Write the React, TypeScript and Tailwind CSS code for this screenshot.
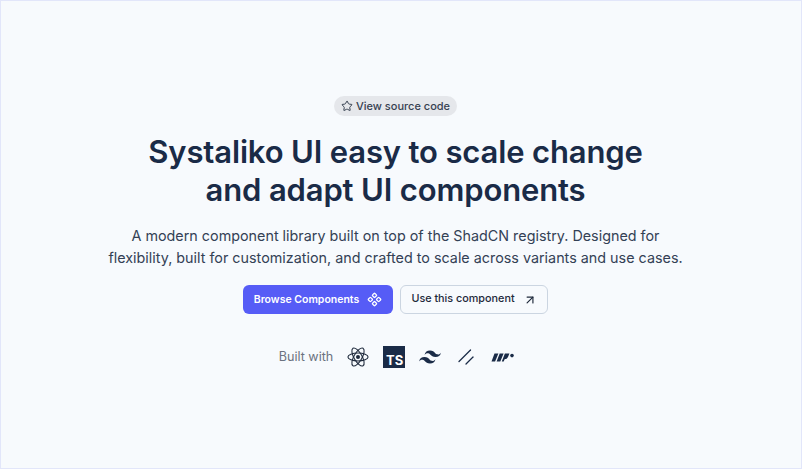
import { ArrowUpRight, Component, Star } from "lucide-react";

function ReactLogo() {
  return (
    <svg width="22" height="22" viewBox="0 0 24 24" fill="none" stroke="#1e293b" strokeWidth="1.2">
      <circle cx="12" cy="12" r="2.2" fill="#1e293b" stroke="none" />
      <ellipse cx="12" cy="12" rx="11" ry="4.4" />
      <ellipse cx="12" cy="12" rx="11" ry="4.4" transform="rotate(60 12 12)" />
      <ellipse cx="12" cy="12" rx="11" ry="4.4" transform="rotate(120 12 12)" />
    </svg>
  );
}

function TsLogo() {
  return (
    <div className="flex h-[22px] w-[22px] items-end justify-end bg-[#1a2b47] pr-[2px] text-[13px] leading-[15px] font-bold text-white">
      TS
    </div>
  );
}

function TailwindLogo() {
  return (
    <svg width="22" height="14" viewBox="0 0 24 15" fill="#1a2b47">
      <path d="M12 0.5c-3.2 0-5.2 1.6-6 4.8 1.2-1.6 2.6-2.2 4.2-1.8.9.2 1.6.9 2.3 1.6 1.2 1.2 2.5 2.5 5.5 2.5 3.2 0 5.2-1.6 6-4.8-1.2 1.6-2.6 2.2-4.2 1.8-.9-.2-1.6-.9-2.3-1.6C16.3 1.8 15 .5 12 .5ZM6 7.6c-3.2 0-5.2 1.6-6 4.8 1.2-1.6 2.6-2.2 4.2-1.8.9.2 1.6.9 2.3 1.6 1.2 1.2 2.5 2.5 5.5 2.5 3.2 0 5.2-1.6 6-4.8-1.2 1.6-2.6 2.2-4.2 1.8-.9-.2-1.6-.9-2.3-1.6C10.3 8.9 9 7.6 6 7.6Z" />
    </svg>
  );
}

function ShadcnLogo() {
  return (
    <svg width="16" height="16" viewBox="0 0 16 16" fill="none" stroke="#1a2b47" strokeWidth="1.3" strokeLinecap="round">
      <path d="M1 12.5 12.5 1" />
      <path d="M8 15 15 8" />
    </svg>
  );
}

function MotionLogo() {
  return (
    <svg width="23" height="9" viewBox="0 0 23 9" fill="#1a2b47">
      <path d="M3.5 0.5H7.4L4.1 8.5H0.5Z" />
      <path d="M8.7 0.5H12.6L9.3 8.5H5.6Z" />
      <path d="M13.9 0.5H18.4L17 4Q16 6.2 13.6 6.2L12.7 8.5H10.8Z" />
      <circle cx="21" cy="2.6" r="1.8" />
    </svg>
  );
}

export default function App() {
  return (
    <div className="flex h-[469px] w-[802px] flex-col items-center border border-[#e2e6fa] bg-[#f7fafd] pt-[95px] pr-[11px] font-['Inter',sans-serif]">
      <a className="flex h-5 items-center gap-[3px] rounded-full bg-[#e5e7eb] px-[7px] text-[11px] font-medium text-[#374151]">
        <Star className="h-3 w-3" />
        View source code
      </a>
      <h1 className="mt-[17px] w-[600px] text-center text-[31px] leading-[38px] font-semibold tracking-[-0.15px] text-[#1a2b47]">
        Systaliko UI easy to scale change
        <br />
        and adapt UI components
      </h1>
      <p className="mt-[16px] text-center text-[14.35px] leading-[22px] text-[#334155]">
        A modern component library built on top of the ShadCN registry. Designed for
        <br />
        flexibility, built for customization, and crafted to scale across variants and use cases.
      </p>
      <div className="mt-[16px] flex gap-[7px]">
        <button className="flex h-[29px] w-[150px] items-center justify-center gap-2 rounded-md bg-[#565cf6] text-[10.5px] font-semibold text-white">
          Browse Components
          <Component className="h-[15px] w-[15px]" />
        </button>
        <button className="flex h-[29px] w-[148px] items-center justify-center gap-2 rounded-md border border-[#cbd5e1] text-[10.8px] font-medium text-[#1e293b]">
          Use this component
          <ArrowUpRight className="h-[14px] w-[14px]" />
        </button>
      </div>
      <div className="mt-[32px] flex items-center pl-[2px]">
        <span className="mr-[14px] text-[12.6px] text-[#6b7280]">Built with</span>
        <div className="flex items-center">
          <ReactLogo />
          <div className="ml-[14px]"><TsLogo /></div>
          <div className="ml-[14px]"><TailwindLogo /></div>
          <div className="ml-[17px]"><ShadcnLogo /></div>
          <div className="ml-[17px]"><MotionLogo /></div>
        </div>
      </div>
    </div>
  );
}
